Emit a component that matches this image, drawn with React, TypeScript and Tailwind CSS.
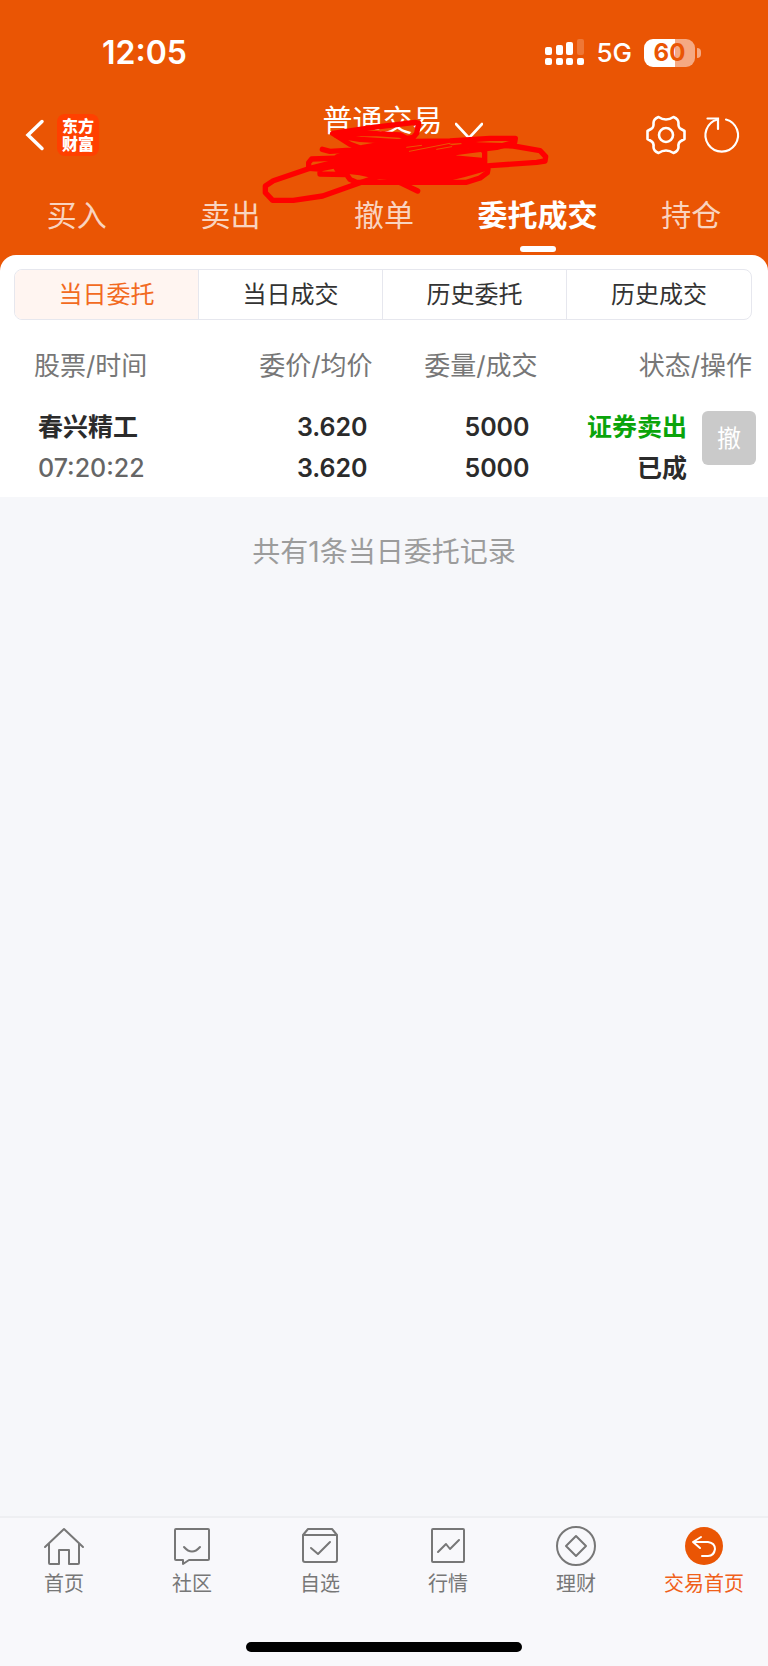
import { useState } from 'react';

interface Order {
  name: string;
  time: string;
  price: string;
  avgPrice: string;
  amount: string;
  filled: string;
  side: string;
  status: string;
}

const tabs = ['买入', '卖出', '撤单', '委托成交', '持仓'];
const filters = ['当日委托', '当日成交', '历史委托', '历史成交'];

const orders: Order[] = [
  {
    name: '春兴精工',
    time: '07:20:22',
    price: '3.620',
    avgPrice: '3.620',
    amount: '5000',
    filled: '5000',
    side: '证券卖出',
    status: '已成',
  },
];

function StatusBar() {
  return (
    <div className="flex h-[106px] items-center justify-between pl-[102px] pr-[67px]">
      <span className="text-[32px] leading-10 font-semibold">12:05</span>
      <div className="flex items-center">
        <svg className="h-7 w-10" viewBox="0 0 40 28" fill="currentColor">
          <rect x="1" y="8" width="7" height="8" rx="2" />
          <rect x="12" y="6" width="7" height="10" rx="2" />
          <rect x="22" y="3" width="7" height="13" rx="2" />
          <rect x="33" y="0" width="7" height="16" rx="2" opacity="0.2" />
          <rect x="1" y="19" width="7" height="7" rx="2" />
          <rect x="12" y="19" width="7" height="7" rx="2" />
          <rect x="22" y="19" width="7" height="7" rx="2" />
          <rect x="33" y="19" width="7" height="7" rx="2" />
        </svg>
        <span className="ml-3 text-[26px] leading-8 font-medium">5G</span>
        <div className="ml-3 flex items-center">
          <div className="flex h-7 w-[51px] items-center justify-center rounded-[9px] bg-linear-to-r from-white from-60% to-[#f5a983] to-60% text-[24px] leading-7 font-bold text-[#ea5504]">
            60
          </div>
          <div className="ml-0.5 h-2.5 w-1 rounded-r-full bg-[#f5a983]" />
        </div>
      </div>
    </div>
  );
}

// Red pen strokes drawn over the account number
function Scribble() {
  return (
    <svg
      className="pointer-events-none absolute top-[90px] left-1/2 h-[130px] w-[352px] -translate-x-1/2"
      viewBox="-126 0 1056 390"
      fill="none"
      stroke="#ff0000"
      strokeWidth="16"
      strokeLinecap="round"
      strokeLinejoin="round"
    >
      <path d="M503 303 455 280 400 255 330 278 218 318 130 331 68 331 46 308 46 288 70 272 180 235 260 215" />
      <path d="M217 178 240 184 340 178 300 163 248 130 370 112 495 97 506 100 500 130 490 142 470 145 450 135 380 131 260 131" />
      <path d="M260 137 330 148 440 155 600 153 720 145 796 145 794 157 740 172 660 182 560 195" />
      <path d="M300 203 185 207 176 218 176 235 210 237 300 218M210 237 210 252 290 254 300 268 320 277 650 277 690 264 712 248 714 238" />
      <path d="M560 180 680 165 790 168 870 182 887 200 885 213 860 217 720 227 640 235" />
      <path d="M640 155 680 165 704 185 704 210 680 228" />
      <path d="M262 200 340 172 420 158 560 158 600 172 610 184 612 204 704 212 704 236 640 254 600 264 460 266 385 260 330 248 262 240 250 215Z" fill="#ff0000" />
      <path d="M470 172 515 166M478 184 600 160M560 178 605 170" stroke="#ea5504" strokeWidth="3" />
    </svg>
  );
}

function Header() {
  const [active, setActive] = useState('委托成交');

  return (
    <header className="relative bg-[#ea5504] pb-[3px] text-white">
      <StatusBar />
      <div className="flex h-[58px] items-center justify-between pr-7 pl-[25px]">
        <div className="flex w-[94px] items-center gap-3">
          <button aria-label="返回">
            <svg className="h-8 w-5" viewBox="0 0 20 32" fill="none" stroke="currentColor" strokeWidth="3.5" strokeLinecap="round">
              <path d="M17 2.500 3 16 17 29.500" />
            </svg>
          </button>
          <div className="flex size-[42px] shrink-0 flex-col items-center justify-center rounded-lg bg-[#ff4000] text-[16px] leading-[18px] font-black">
            <span>东方</span>
            <span>财富</span>
          </div>
        </div>
        <button className="flex items-start gap-3 self-start pl-10 text-[30px] leading-7">
          普通交易
          <svg className="mt-4 h-5 w-7" viewBox="0 0 28 20" fill="none" stroke="currentColor" strokeWidth="2.6" strokeLinecap="round">
            <path d="M1 2 14 16 27 2" />
          </svg>
        </button>
        <div className="flex items-center gap-[18px]">
          <button aria-label="设置">
            <svg className="size-10" viewBox="0 0 40 40" fill="none" stroke="currentColor" strokeWidth="2.6" strokeLinejoin="round">
              <path d="M12.500 2Q20 7 27.500 2Q32.500 4 32.500 8Q32 12.500 35 14L38.500 16V24L35 26Q32 27.500 32.500 32Q32.500 36 27.500 38Q20 33 12.500 38Q7.500 36 7.500 32Q8 27.500 5 26L1.500 24V16L5 14Q8 12.500 7.500 8Q7.500 4 12.500 2Z" />
              <circle cx="20" cy="20" r="7" />
            </svg>
          </button>
          <button aria-label="刷新">
            <svg className="size-9 overflow-visible" viewBox="0 0 36 36" fill="none" stroke="currentColor" strokeWidth="2.2" strokeLinecap="round">
              <path d="M22 2.500A16.300 16.300 0 1 1 13.500 2.500" />
              <path d="M3.500 1.500H14V12" />
            </svg>
          </button>
        </div>
      </div>
      <nav className="grid grid-cols-5">
        {tabs.map((tab) => (
          <button key={tab} onClick={() => setActive(tab)} className="flex flex-col items-center pt-[31px] text-[30px] leading-10">
            <span className={active === tab ? 'font-bold' : 'text-white/75'}>{tab}</span>
            <span className={`mt-[11px] h-1.5 w-9 rounded-full ${active === tab ? 'bg-white' : ''}`} />
          </button>
        ))}
      </nav>
      <Scribble />
    </header>
  );
}

function Filters() {
  const [active, setActive] = useState('当日委托');

  return (
    <div className="mr-4 ml-3.5 grid h-[51px] grid-cols-4 divide-x divide-[#e6e7ee] overflow-hidden rounded-lg border border-[#e6e7ee]">
      {filters.map((filter) => (
        <button
          key={filter}
          onClick={() => setActive(filter)}
          className={`text-[24px] leading-8 ${active === filter ? 'bg-[#fff5f1] text-[#f26a21]' : 'text-[#333333]'}`}
        >
          {filter}
        </button>
      ))}
    </div>
  );
}

function Orders() {
  return (
    <table className="mt-6 w-full table-fixed">
      <thead className="text-[26px] leading-11 text-[#777777]">
        <tr>
          <th className="w-[27%] pl-[34px] text-left font-normal">股票/时间</th>
          <th className="text-right font-normal">委价/均价</th>
          <th className="w-[165px] text-right font-normal">委量/成交</th>
          <th className="w-[30%] pr-4 text-right font-normal">状态/操作</th>
        </tr>
      </thead>
      <tbody className="text-[25px] leading-[41px] font-semibold text-[#2b2b2b]">
        {orders.map((order) => (
          <tr key={order.time}>
            <td className="pt-[19px] pb-2 pl-[38px]">
              <div>{order.name}</div>
              <div className="font-medium text-[#666666]">{order.time}</div>
            </td>
            <td className="pt-[19px] pr-[5px] pb-2 text-right">
              <div>{order.price}</div>
              <div>{order.avgPrice}</div>
            </td>
            <td className="pt-[19px] pr-2 pb-2 text-right">
              <div>{order.amount}</div>
              <div>{order.filled}</div>
            </td>
            <td className="pt-[19px] pr-3 pb-2">
              <div className="flex items-start justify-end gap-[15px] text-right">
                <div>
                  <div className="text-[#0aa40a]">{order.side}</div>
                  <div>{order.status}</div>
                </div>
                <button className="mt-1 size-[54px] rounded-md bg-[#cacaca] text-[24px] font-normal text-white" disabled>
                  撤
                </button>
              </div>
            </td>
          </tr>
        ))}
      </tbody>
    </table>
  );
}

const navItems = [
  {
    label: '首页',
    icon: (
      <>
        <path d="M1 20 20 2 39 20" />
        <path d="M5 17V36Q5 37 6 37H15V23H25V37H34Q35 37 35 36V17" />
      </>
    ),
  },
  {
    label: '社区',
    icon: (
      <>
        <path d="M4 2H36Q37 2 37 3V32Q37 33 36 33H17L11 37V33H4Q3 33 3 32V3Q3 2 4 2Z" />
        <path d="M12 20Q20 29 28 20" />
      </>
    ),
  },
  {
    label: '自选',
    icon: (
      <>
        <path d="M3 8 8 2H32L37 8V33Q37 35 35 35H5Q3 35 3 33ZM3 8H37" />
        <path d="M11 21 18 27 30 15" />
      </>
    ),
  },
  {
    label: '行情',
    icon: (
      <>
        <rect x="4" y="2" width="32" height="33" rx="1" />
        <path d="M10 25 18 17 22 22 31 13" />
      </>
    ),
  },
  {
    label: '理财',
    icon: (
      <>
        <circle cx="20" cy="19" r="19" />
        <path d="M20 9 30 19 20 29 10 19Z" />
      </>
    ),
  },
  {
    label: '交易首页',
    icon: (
      <>
        <circle cx="20" cy="19" r="19" fill="#ea5504" stroke="none" />
        <path d="M17 10 9 15 16 21M9 15H24Q31 16 31 22Q30 29 24 29H18" stroke="#ffffff" />
      </>
    ),
  },
];

function BottomNav() {
  return (
    <footer className="border-t-2 border-[#eeeff2] bg-[#f8f8fb] pt-[9px]">
      <nav className="grid grid-cols-6">
        {navItems.map((item) => (
          <a
            key={item.label}
            href="#"
            className={`flex flex-col items-center text-[20px] leading-7 ${
              item.label === '交易首页' ? 'text-[#f0601a]' : 'text-[#777777]'
            }`}
          >
            <svg className="mb-[3px] size-10 overflow-visible" viewBox="0 0 40 40" fill="none" stroke="currentColor" strokeWidth="2" strokeLinecap="round" strokeLinejoin="round">
              {item.icon}
            </svg>
            {item.label}
          </a>
        ))}
      </nav>
      <div className="mx-auto mt-11 mb-3.5 h-[10px] w-[276px] rounded-full bg-black" />
    </footer>
  );
}

export default function App() {
  return (
    <div className="flex min-h-screen flex-col bg-[#f6f7fa] font-[Inter,'Noto_Sans_CJK_SC',sans-serif]">
      <div className="bg-[#ea5504]">
        <Header />
        <section className="rounded-t-2xl bg-white pt-3.5">
          <Filters />
          <Orders />
        </section>
      </div>
      <p className="mt-[37px] flex-1 text-center text-[28px] leading-9 text-[#9c9c9c]">
        共有1条当日委托记录
      </p>
      <BottomNav />
    </div>
  );
}
